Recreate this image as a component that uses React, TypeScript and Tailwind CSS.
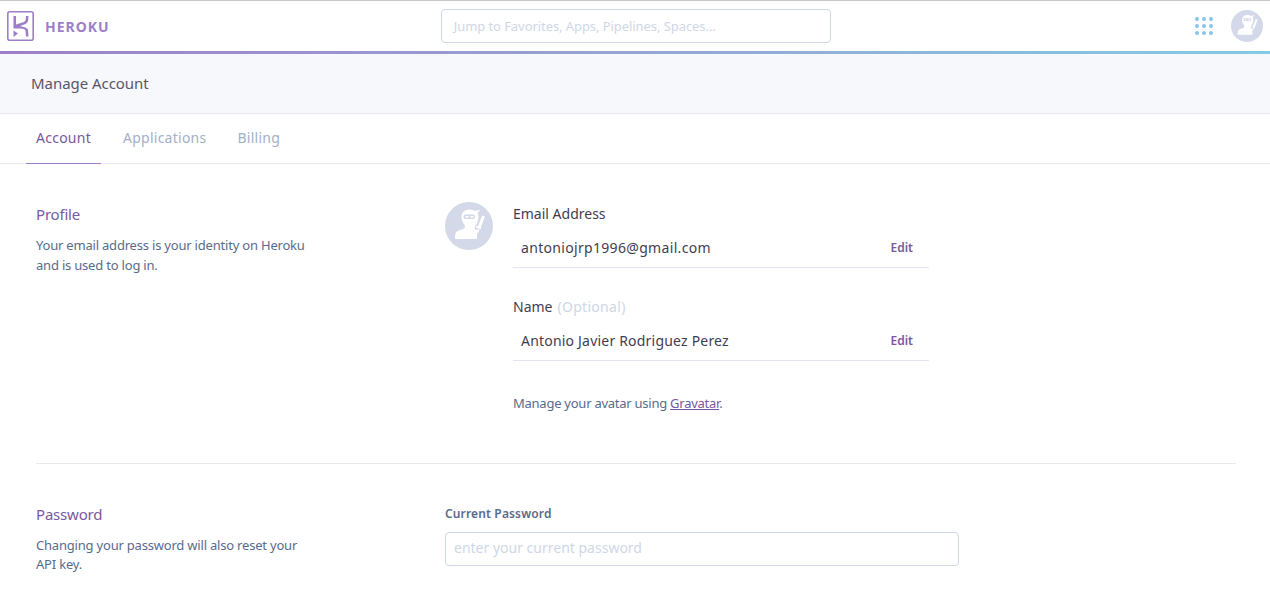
import React from "react";

const font = { fontFamily: '"Noto Sans", "Open Sans", sans-serif' };

function Ninja({ size, bg }: { size: number; bg: string }) {
  return (
    <svg width={size} height={size} viewBox="0 0 48 48" className="block shrink-0">
      <circle cx="24" cy="24" r="24" fill={bg} />
      <path fill="#fff" d="M16.500 15c0-4.500 3.500-7.500 8-7.500 2.500 0 4.500.8 5.500 1.500L35.500 7.500 32.500 11c.8 1.500 1 3.500.8 5.500-.3 3-1.500 5.500-3.300 7.500l-.5 3 2.500 1V37H10v-3c0-3.500 2-5 5-6l4.500-1.500.5-3c-2-2.500-3.500-5-3.500-8.500z" />
      <rect x="18.500" y="12.500" width="11.500" height="4.500" rx="2" fill={bg} />
      <rect x="20.500" y="14" width="3" height="1.600" fill="#fff" />
      <rect x="25.500" y="14" width="3" height="1.600" fill="#fff" />
      <path fill="none" stroke="#fff" strokeWidth="3" d="M38.500 14L34 26" />
      <path fill="none" stroke="#fff" strokeWidth="1.500" d="M33.500 27L32.500 31M31 24.500l5 2" />
    </svg>
  );
}

function Dots() {
  return (
    <div className="grid grid-cols-3 gap-x-[3px] gap-y-[3px]">
      {Array.from({ length: 9 }).map((_, i) => (
        <span key={i} className="block w-[4px] h-[4px] rounded-full bg-[#85c6ec]" />
      ))}
    </div>
  );
}

function Field({ label, optional, value, tracking }: { label: string; optional?: string; value: string; tracking: string }) {
  return (
    <div className="w-[416px]">
      <div className="h-[20px] text-[14px] leading-[20px] text-[#3f3d52]">
        {label}
        {optional && <span className="ml-[1px] tracking-[0.3px] text-[#cfd7e6]"> {optional}</span>}
      </div>
      <div className="flex items-center justify-between h-[44px] pl-2 pr-4 pt-[3px] border-b border-[#e3e5ee]">
        <span className={`text-[14px] text-[#3f3d52] ${tracking}`}>{value}</span>
        <span className="pt-[2px] text-[12px] font-semibold text-[#79589f]">Edit</span>
      </div>
    </div>
  );
}

export default function App() {
  return (
    <div style={font} className="w-[1270px] h-[590px] overflow-hidden bg-white">
      <header className="h-[51px] flex items-center border-t border-[#c9c9c9] pl-[7px] pr-[7px]">
        <svg width="27" height="30" viewBox="0 0 27 30" className="block shrink-0">
          <rect x="0.800" y="0.800" width="25.400" height="28.400" rx="2" fill="none" stroke="#9e7fc7" strokeWidth="1.600" />
          <path
            fill="#9e7fc7"
            d="M6.500 5H9V13.500L17 11 18.500 9.500 19 5H21.500L21 10.500 18.500 13 13 15 18.500 16.500 21 18.500 21.500 25.500H19L18.500 19.500 17 18 13.500 17.500H6.500Z"
          />
          <path fill="#9e7fc7" d="M6.500 19.500L11 22.500 6.500 26z" />
        </svg>
        <span className="ml-[11px] pt-[1px] text-[14px] font-bold tracking-[1px] text-[#9e7fc7]">HEROKU</span>
        <div className="ml-[331px] flex items-center w-[390px] h-[34px] rounded-[4px] border border-[#cfd7e6] pl-3 pt-[1px] text-[13px] tracking-[-0.070px] text-[#cfd7e6]">
          Jump to Favorites, Apps, Pipelines, Spaces...
        </div>
        <div className="ml-auto flex items-center gap-[18px]">
          <Dots />
          <Ninja size={32} bg="#d3d9e8" />
        </div>
      </header>
      <div className="h-[3px] bg-gradient-to-r from-[#9e7fc7] to-[#82cbe2]" />
      <div className="h-[60px] bg-[#f7f8fb] border-b border-[#e7e8f0] flex items-center pl-[31px] text-[15px] tracking-[-0.050px] text-[#59566a]">
        Manage Account
      </div>
      <nav className="h-[50px] border-b border-[#e7e8f0] flex pl-[26px] text-[14px] tracking-[0.250px] text-[#a3b0c8]">
        <div className="w-[75px] h-[50px] pb-[2px] flex items-center justify-center border-b border-[#9e7fc7] text-[#79589f]">Account</div>
        <div className="ml-[22px] pb-[2px] flex items-center">Applications</div>
        <div className="ml-[31px] pb-[2px] flex items-center">Billing</div>
      </nav>
      <div className="pl-[36px] pr-[34px]">
        <section className="flex h-[300px] border-b border-[#e7e8f0] pt-[38px]">
          <div className="w-[409px]">
            <div className="text-[15px] leading-[24px] tracking-[-0.200px] text-[#79589f]">Profile</div>
            <p className="mt-[9px] w-[280px] text-[13px] leading-[20px] tracking-[-0.200px] text-[#596b8c]">
              Your email address is your identity on Heroku and is used to log in.
            </p>
          </div>
          <div className="flex">
            <Ninja size={48} bg="#d3d9e8" />
            <div className="ml-[20px] pt-[2px]">
              <Field label="Email Address" value="antoniojrp1996@gmail.com" tracking="tracking-[0.320px]" />
              <div className="mt-[29px]">
                <Field label="Name" optional="(Optional)" value="Antonio Javier Rodriguez Perez" tracking="tracking-[0.200px]" />
              </div>
              <p className="mt-[32px] text-[13px] leading-[20px] tracking-[-0.250px] text-[#596b8c]">
                Manage your avatar using <a className="underline text-[#79589f]">Gravatar</a>.
              </p>
            </div>
          </div>
        </section>
        <section className="flex pt-[38px]">
          <div className="w-[409px]">
            <div className="text-[15px] leading-[24px] tracking-[-0.200px] text-[#79589f]">Password</div>
            <p className="mt-[10px] w-[280px] text-[13px] leading-[19px] tracking-[-0.200px] text-[#596b8c]">
              Changing your password will also reset your API key.
            </p>
          </div>
          <div className="pt-[2px]">
            <div className="text-[12px] font-semibold leading-[20px] tracking-[0.150px] text-[#596b8c]">Current Password</div>
            <div className="mt-[8px] flex items-center w-[514px] h-[34px] rounded-[4px] border border-[#cfd7e6] pl-2 pb-[4px] text-[14px] text-[#cfd7e6]">
              enter your current password
            </div>
          </div>
        </section>
      </div>
    </div>
  );
}
